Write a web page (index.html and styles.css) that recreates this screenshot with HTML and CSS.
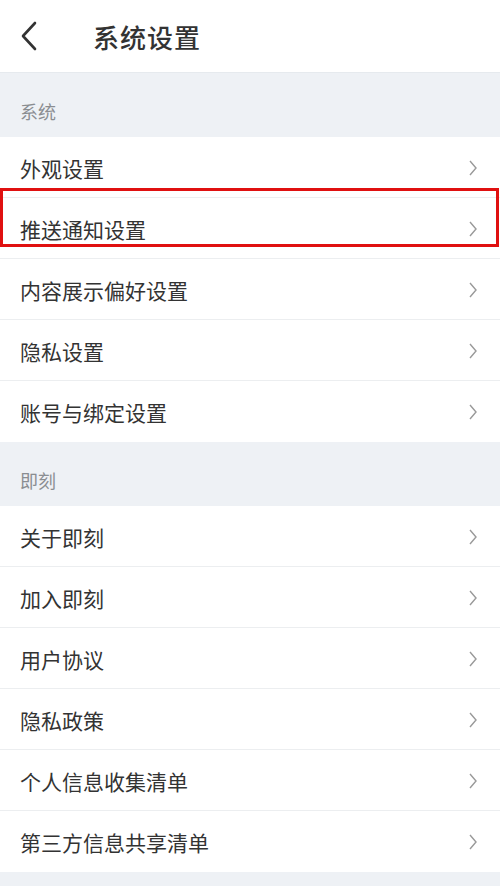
FILE: index.html
```html
<!DOCTYPE html>
<html lang="zh-CN">
<head>
  <meta charset="UTF-8" />
  <meta name="viewport" content="width=device-width, initial-scale=1.0"/>
  <title>系统设置</title>
  <link rel="stylesheet" href="styles.css">
</head>
<body>
  <div class="header">
    <svg class="back" width="20" height="30" viewBox="0 0 20 30"><path d="M16 2 L4 15 L16 28" fill="none" stroke="#333" stroke-width="2.6" stroke-linecap="round" stroke-linejoin="round"/></svg>
    <div class="title">系统设置</div>
  </div>

  <div class="section">系统</div>
  <div class="list">
    <div class="row"><span>外观设置</span><svg class="arrow" viewBox="0 0 10 16"><path d="M2 1 L8 8 L2 15" fill="none" stroke="#999" stroke-width="1.4"/></svg></div>
    <div class="row"><span>推送通知设置</span><svg class="arrow" viewBox="0 0 10 16"><path d="M2 1 L8 8 L2 15" fill="none" stroke="#999" stroke-width="1.4"/></svg></div>
    <div class="row"><span>内容展示偏好设置</span><svg class="arrow" viewBox="0 0 10 16"><path d="M2 1 L8 8 L2 15" fill="none" stroke="#999" stroke-width="1.4"/></svg></div>
    <div class="row"><span>隐私设置</span><svg class="arrow" viewBox="0 0 10 16"><path d="M2 1 L8 8 L2 15" fill="none" stroke="#999" stroke-width="1.4"/></svg></div>
    <div class="row"><span>账号与绑定设置</span><svg class="arrow" viewBox="0 0 10 16"><path d="M2 1 L8 8 L2 15" fill="none" stroke="#999" stroke-width="1.4"/></svg></div>
  </div>

  <div class="section">即刻</div>
  <div class="list">
    <div class="row"><span>关于即刻</span><svg class="arrow" viewBox="0 0 10 16"><path d="M2 1 L8 8 L2 15" fill="none" stroke="#999" stroke-width="1.4"/></svg></div>
    <div class="row"><span>加入即刻</span><svg class="arrow" viewBox="0 0 10 16"><path d="M2 1 L8 8 L2 15" fill="none" stroke="#999" stroke-width="1.4"/></svg></div>
    <div class="row"><span>用户协议</span><svg class="arrow" viewBox="0 0 10 16"><path d="M2 1 L8 8 L2 15" fill="none" stroke="#999" stroke-width="1.4"/></svg></div>
    <div class="row"><span>隐私政策</span><svg class="arrow" viewBox="0 0 10 16"><path d="M2 1 L8 8 L2 15" fill="none" stroke="#999" stroke-width="1.4"/></svg></div>
    <div class="row"><span>个人信息收集清单</span><svg class="arrow" viewBox="0 0 10 16"><path d="M2 1 L8 8 L2 15" fill="none" stroke="#999" stroke-width="1.4"/></svg></div>
    <div class="row"><span>第三方信息共享清单</span><svg class="arrow" viewBox="0 0 10 16"><path d="M2 1 L8 8 L2 15" fill="none" stroke="#999" stroke-width="1.4"/></svg></div>
  </div>

  <div class="highlight"></div>
</body>
</html>
```

FILE: styles.css
```css
body {
  margin: 0;
  font-family: "Noto Sans CJK SC", "Noto Sans", sans-serif;
  background: #eef1f5;
  position: relative;
  height: 886px;
  overflow: hidden;
}
.header {
  height: 73px;
  background: #fff;
  display: flex;
  align-items: center;
  padding-left: 19px;
  border-bottom: 1px solid #e6eaee;
  box-sizing: border-box;
}
.back {
  display: block;
}
.title {
  margin-left: 54px;
  font-size: 26px;
  font-weight: 500;
  color: #333;
  letter-spacing: 1px;
}
.section {
  height: 64px;
  box-sizing: border-box;
  display: flex;
  align-items: flex-end;
  padding: 0 0 13px 20px;
  font-size: 18px;
  color: #8a8d91;
}
.list {
  background: #fff;
}
.row {
  height: 61px;
  box-sizing: border-box;
  display: flex;
  align-items: center;
  justify-content: space-between;
  padding: 1px 22px 0 20px;
  border-bottom: 1px solid #eceef0;
  font-size: 21px;
  color: #333;
}
.row:last-child {
  border-bottom: none;
}
.arrow {
  width: 10px;
  height: 16px;
}
.highlight {
  position: absolute;
  left: 0;
  top: 188px;
  width: 499px;
  height: 59px;
  box-sizing: border-box;
  border: 3px solid #e01010;
}
```
